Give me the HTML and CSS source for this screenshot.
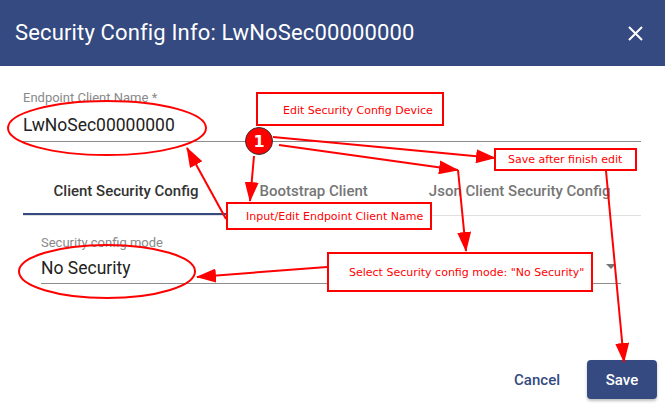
FILE: index.html
```html
<!DOCTYPE html>
<html>
<head>
<meta charset="utf-8">
<link rel="stylesheet" href="styles.css">
</head>
<body>
<div class="dialog">
  <header class="header">
    <h2 class="title">Security Config Info: LwNoSec00000000</h2>
    <svg class="close" width="15" height="15" viewBox="0 0 15 15"><path d="M1 1L14 14M14 1L1 14" stroke="#fff" stroke-width="2" fill="none"/></svg>
  </header>
  <main class="content">
    <div class="field field-name">
      <label class="label">Endpoint Client Name *</label>
      <div class="value">LwNoSec00000000</div>
    </div>
    <nav class="tabs">
      <div class="tab active">Client Security Config</div>
      <div class="tab">Bootstrap Client</div>
      <div class="tab">Json Client Security Config</div>
    </nav>
    <section class="tab-body">
      <div class="field field-mode">
        <label class="label">Security config mode</label>
        <div class="value select"><span>No Security</span><span class="caret"></span></div>
      </div>
    </section>
  </main>
  <footer class="actions">
    <button class="btn-cancel">Cancel</button>
    <button class="btn-save">Save</button>
  </footer>
</div>

<div class="notes">
  <svg class="notes-svg" width="665" height="406" viewBox="0 0 665 406">
    <defs>
      <marker id="ah" markerUnits="userSpaceOnUse" markerWidth="20" markerHeight="14" refX="19" refY="7" orient="auto">
        <path d="M0,0 L20,7 L0,14 z" fill="#ff0000"/>
      </marker>
    </defs>
    <ellipse cx="107" cy="128" rx="99" ry="27" fill="none" stroke="#ff0000" stroke-width="2"/>
    <ellipse cx="107" cy="271.5" rx="88" ry="26.5" fill="none" stroke="#ff0000" stroke-width="2"/>
    <g stroke="#ff0000" stroke-width="2" fill="none">
      <line x1="273" y1="137" x2="495" y2="158" marker-end="url(#ah)"/>
      <line x1="279" y1="145" x2="458" y2="170" marker-end="url(#ah)"/>
      <line x1="458" y1="170" x2="466" y2="251" marker-end="url(#ah)"/>
      <line x1="606" y1="171" x2="624" y2="362" marker-end="url(#ah)"/>
      <line x1="254" y1="156" x2="250" y2="201" marker-end="url(#ah)"/>
      <line x1="226" y1="219" x2="187" y2="148" marker-end="url(#ah)"/>
      <line x1="327" y1="267" x2="197" y2="277" marker-end="url(#ah)"/>
    </g>
  </svg>
  <div class="note note-edit">Edit Security Config Device</div>
  <div class="note note-save">Save after finish edit</div>
  <div class="note note-input">Input/Edit Endpoint Client Name</div>
  <div class="note note-select">Select Security config mode: "No Security"</div>
  <div class="badge">1</div>
</div>
</body>
</html>
```

FILE: styles.css
```css
* { box-sizing: border-box; }
html, body { margin: 0; padding: 0; }
body {
  width: 665px;
  height: 406px;
  overflow: hidden;
  background: #fff;
  font-family: Roboto, "Liberation Sans", sans-serif;
  position: relative;
}
.dialog {
  display: flex;
  flex-direction: column;
  height: 406px;
}
.header {
  height: 66px;
  background: #344a80;
  display: flex;
  align-items: center;
  justify-content: space-between;
  padding: 0 22px 0 15px;
  flex: none;
}
.title {
  margin: 0;
  color: #fff;
  font-size: 22px;
  font-weight: 400;
  line-height: 28px;
  letter-spacing: 0.15px;
}
.close { display: block; margin-top: 1px; }

.content {
  padding: 0 24px 0 23px;
}
.field { display: flex; flex-direction: column; }
.label {
  font-size: 13px;
  line-height: 16px;
  color: #8a8a8a;
}
.value {
  font-size: 17.5px;
  line-height: 24px;
  color: #222;
  border-bottom: 1px solid #8c8c8c;
}
.field-name { margin-top: 24px; }
.field-name .value { margin-top: 7px; padding-bottom: 4px; }

.tabs {
  display: flex;
  margin-top: 25px;
  border-bottom: 1px solid #e0e0e0;
}
.tab {
  flex: 1 1 auto;
  padding: 0 24px;
  height: 48px;
  line-height: 48px;
  text-align: center;
  font-size: 15px;
  font-weight: 500;
  color: #767676;
  white-space: nowrap;
}
.tab.active {
  color: #333;
  box-shadow: inset 0 -2px 0 #344a80;
}

.tab-body { padding: 0 20px 0 18px; }
.field-mode { margin-top: 19px; }
.field-mode .value { margin-top: 5px; padding-bottom: 3px; }
.select {
  display: flex;
  justify-content: space-between;
  align-items: center;
}
.caret {
  width: 0;
  height: 0;
  border-left: 5px solid transparent;
  border-right: 5px solid transparent;
  border-top: 5px solid #757575;
  margin-right: 5px;
  margin-top: -3px;
}

.actions {
  margin-top: auto;
  display: flex;
  justify-content: flex-end;
  align-items: center;
  gap: 11px;
  padding: 0 8px 7px 0;
}
.actions button {
  font-family: Roboto, "Liberation Sans", sans-serif;
  font-size: 15px;
  font-weight: 500;
  height: 39px;
  border: 0;
  border-radius: 4px;
  cursor: pointer;
}
.btn-cancel {
  background: transparent;
  color: #344a80;
  padding: 0 16px;
}
.btn-save {
  background: #344a80;
  color: #fff;
  width: 70px;
  box-shadow: 0 2px 3px rgba(0,0,0,0.25);
}

/* annotation overlay */
.notes {
  position: absolute;
  left: 0;
  top: 0;
  width: 665px;
  height: 406px;
  pointer-events: none;
}
.notes-svg { position: absolute; left: 0; top: 0; }
.note {
  position: absolute;
  background: #fff;
  border: 2px solid #ff0000;
  color: #ff0000;
  font-family: "DejaVu Sans", sans-serif;
  font-size: 11px;
  display: flex;
  align-items: center;
  white-space: nowrap;
}
.note-edit { left: 256px; top: 92px; width: 188px; height: 34px; padding: 3px 0 0 25px; }
.note-save { left: 494px; top: 148px; width: 143px; height: 23px; padding-left: 12px; }
.note-input { left: 226px; top: 202px; width: 206px; height: 28px; padding-left: 18px; }
.note-select { left: 327px; top: 252px; width: 266px; height: 40px; padding-left: 20px; }
.badge {
  position: absolute;
  left: 245px;
  top: 127px;
  width: 28px;
  height: 28px;
  border-radius: 50%;
  background: #ff0000;
  border: 1px solid #333;
  color: #fff;
  font-family: "DejaVu Sans", sans-serif;
  font-weight: 700;
  font-size: 16px;
  display: flex;
  align-items: center;
  justify-content: center;
}
```
